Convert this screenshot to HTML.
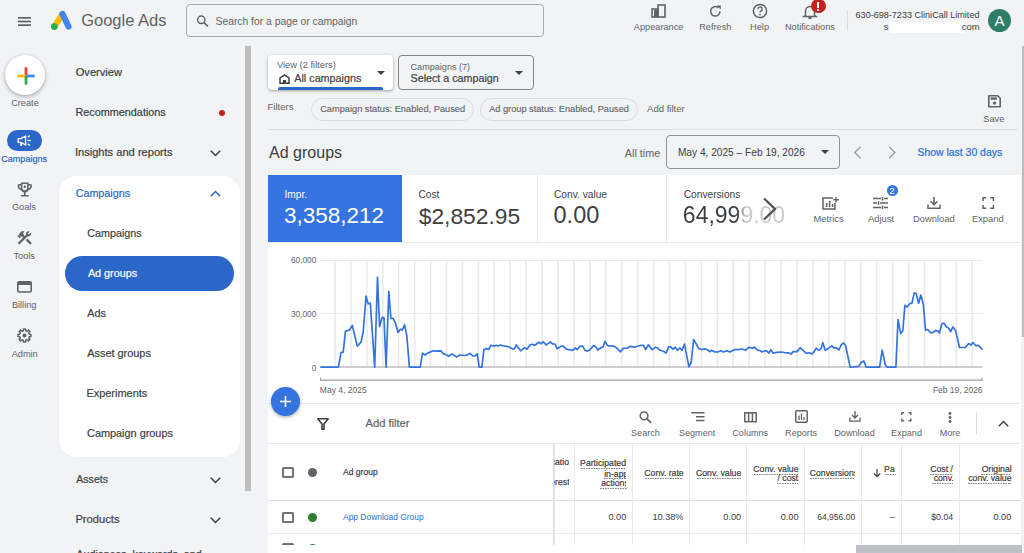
<!DOCTYPE html>
<html><head><meta charset="utf-8">
<style>
*{box-sizing:border-box;margin:0;padding:0}
html,body{width:1024px;height:553px;overflow:hidden;background:#f1f3f4;font-family:"Liberation Sans",sans-serif;color:#3c4043}
.a{position:absolute}
.t{position:absolute;white-space:nowrap;line-height:1}
.m{-webkit-text-stroke:0.2px currentColor}
.ic{position:absolute;overflow:visible}
</style></head><body>
<svg class="ic" style="left:18px;top:17px" width="13" height="9" viewBox="0 0 13 9"><rect y="0" width="13" height="1.7" fill="#5f6368"/><rect y="3.65" width="13" height="1.7" fill="#5f6368"/><rect y="7.3" width="13" height="1.7" fill="#5f6368"/></svg>
<svg class="ic" style="left:49.2px;top:10px" width="24" height="21" viewBox="0 0 24 21"><line x1="13.5" y1="4" x2="5.5" y2="16.5" stroke="#fbbc04" stroke-width="6.2" stroke-linecap="round"/><line x1="13.5" y1="4" x2="19.5" y2="16.5" stroke="#4285f4" stroke-width="6.2" stroke-linecap="round"/><circle cx="5.3" cy="16.6" r="3.4" fill="#34a853"/></svg>
<div class="t" style="left:81.17px;top:13.26px;font-size:16.52px;color:#5f6368;">Google Ads</div>
<div class="a" style="left:185.5px;top:3.5px;width:358px;height:33.5px;border:1px solid #a8abb0;border-radius:4px"></div>
<svg class="ic" style="left:196px;top:15px" width="13" height="12" viewBox="0 0 13 13"><circle cx="5.2" cy="5.2" r="4" fill="none" stroke="#5f6368" stroke-width="1.6"/><line x1="8.2" y1="8.2" x2="12.3" y2="12.3" stroke="#5f6368" stroke-width="1.8"/></svg>
<div class="t" style="left:215.53px;top:17.01px;font-size:10.34px;color:#5f6368;">Search for a page or campaign</div>
<svg class="ic" style="left:651px;top:4px" width="15" height="14" viewBox="0 0 15 14"><rect x="1" y="5" width="6" height="8" fill="none" stroke="#5f6368" stroke-width="1.6"/><rect x="7" y="1" width="7" height="12" fill="none" stroke="#5f6368" stroke-width="1.6"/><rect x="3" y="6" width="4" height="7" fill="#5f6368"/></svg>
<div class="t" style="left:633.86px;top:22.88px;font-size:9.20px;color:#5f6368;">Appearance</div>
<svg class="ic" style="left:709px;top:5px" width="13" height="12" viewBox="0 0 13 12"><path d="M11 6.3 A4.7 4.7 0 1 1 9.3 2.7" fill="none" stroke="#5f6368" stroke-width="1.5"/><path d="M7.6 0.4 L11.8 0.4 L11.8 4.6 Z" fill="#5f6368"/></svg>
<div class="t" style="left:699.18px;top:22.88px;font-size:9.20px;color:#5f6368;">Refresh</div>
<svg class="ic" style="left:752px;top:3px" width="16" height="16" viewBox="0 0 16 16"><circle cx="8" cy="8" r="6.6" fill="none" stroke="#5f6368" stroke-width="1.5"/><path d="M5.9 6.2 A2.1 2.1 0 1 1 8.8 8.1 C8.2 8.4 8 8.8 8 9.6" fill="none" stroke="#5f6368" stroke-width="1.4"/><circle cx="8" cy="11.6" r="0.9" fill="#5f6368"/></svg>
<div class="t" style="left:750.11px;top:22.88px;font-size:9.20px;color:#5f6368;">Help</div>
<svg class="ic" style="left:803px;top:4px" width="14" height="15" viewBox="0 0 14 15"><path d="M2.5 11.5 L2.5 7 A4.5 4.5 0 0 1 11.5 7 L11.5 11.5 L13 12.5 L1 12.5 Z" fill="none" stroke="#5f6368" stroke-width="1.5"/><rect x="5.5" y="13" width="3" height="2" fill="#5f6368"/></svg>
<div class="a" style="left:811px;top:-1.5px;width:14.5px;height:14.5px;border-radius:50%;background:#c5221f"></div>
<div class="a" style="left:817px;top:2px;width:2.2px;height:5.5px;background:#fff"></div><div class="a" style="left:817px;top:8.5px;width:2.2px;height:2px;background:#fff"></div>
<div class="t" style="left:784.90px;top:22.88px;font-size:9.20px;color:#5f6368;">Notifications</div>
<div class="a" style="left:846.5px;top:9.5px;width:1px;height:21.5px;background:#dadce0"></div>
<div class="t" style="left:855.55px;top:11.29px;font-size:9.07px;color:#3c4043;">630-698-7233 CliniCall Limited</div>
<div class="t" style="left:883.72px;top:22.23px;font-size:9.50px;color:#3c4043;">s</div>
<div class="a" style="left:890px;top:21.8px;width:73.5px;height:11.2px;background:#fff"></div>
<div class="t" style="left:961.66px;top:22.23px;font-size:9.50px;color:#3c4043;">com</div>
<div class="a" style="left:988px;top:9.3px;width:23px;height:23px;border-radius:50%;background:#2e7d67"></div>
<div class="t" style="left:994.50px;top:12.72px;font-size:15.04px;color:#fff;">A</div>
<div class="a" style="left:5px;top:55px;width:40px;height:40px;border-radius:50%;background:#fff;box-shadow:0 1px 3px rgba(60,64,67,.3),0 2px 4px 1px rgba(60,64,67,.15)"></div>
<svg class="ic" style="left:16.5px;top:66.5px" width="18" height="18" viewBox="0 0 18 18"><rect x="7.6" y="0.3" width="2.8" height="8.7" fill="#ea4335"/><rect x="0.3" y="7.6" width="8.7" height="2.8" fill="#fbbc04"/><rect x="9" y="7.6" width="8.7" height="2.8" fill="#4285f4"/><rect x="7.6" y="9" width="2.8" height="8.7" fill="#34a853"/></svg>
<div class="t" style="left:11.18px;top:99.18px;font-size:9.20px;color:#5f6368;">Create</div>
<div class="a" style="left:7px;top:130.4px;width:35px;height:20.3px;border-radius:11px;background:#2b67c8"></div>
<svg class="ic" style="left:17px;top:134.5px" width="15" height="12" viewBox="0 0 15 12"><path d="M1.2 3.6 L3.8 3.6 L8.6 1 L8.6 10 L3.8 7.4 L1.2 7.4 Z" fill="none" stroke="#fff" stroke-width="1.4" stroke-linejoin="round"/><path d="M3.2 7.5 L3.2 11 L5 11 L5 7.8" fill="#fff"/><line x1="10.6" y1="5.5" x2="13.8" y2="5.5" stroke="#fff" stroke-width="1.3"/><line x1="10.8" y1="2.2" x2="12.8" y2="0.6" stroke="#fff" stroke-width="1.3"/><line x1="10.8" y1="8.8" x2="12.8" y2="10.4" stroke="#fff" stroke-width="1.3"/></svg>
<div class="t m" style="left:1.25px;top:155.31px;font-size:9.05px;color:#2b67c8;">Campaigns</div>
<svg class="ic" style="left:16.5px;top:182px" width="15.5" height="15" viewBox="2.5 2.5 19 19"><path fill="#5f6368" d="M19 5h-2V3H7v2H5c-1.1 0-2 .9-2 2v1c0 2.55 1.92 4.63 4.39 4.94.63 1.5 1.98 2.63 3.61 2.96V19H7v2h10v-2h-4v-3.1c1.63-.33 2.98-1.46 3.61-2.96C19.08 12.63 21 10.55 21 8V7c0-1.1-.9-2-2-2zM5 8V7h2v3.82C5.84 10.4 5 9.3 5 8zm14 0c0 1.3-.84 2.4-2 2.82V7h2v1zM9 5h6v5a3 3 0 0 1-6 0z"/><circle cx="12" cy="8.5" r="1.5" fill="#5f6368"/></svg>
<div class="t" style="left:11.93px;top:202.98px;font-size:9.20px;color:#5f6368;">Goals</div>
<svg class="ic" style="left:17px;top:230.5px" width="15" height="14" viewBox="2 2.8 20 19"><path fill="#5f6368" d="M13.78 15.3L19.78 21.3L21.89 19.14L15.89 13.14L13.78 15.3M17.5 10.1C17.11 10.1 16.69 10.05 16.36 9.91L4.97 21.25L2.86 19.14L10.27 11.74L8.5 9.96L7.78 10.66L6.33 9.25V12.11L5.63 12.81L2.11 9.25L2.81 8.55H5.62L4.22 7.14L7.78 3.58C8.95 2.41 10.83 2.41 12 3.58L9.89 5.74L11.3 7.14L10.590 7.85L12.38 9.63L14.2 7.75C14.06 7.42 14 7 14 6.63C14 4.66 15.56 3.11 17.5 3.11C18.09 3.11 18.61 3.250 19.08 3.53L16.41 6.2L17.91 7.7L20.58 5.03C20.86 5.5 21 6 21 6.63C21 8.55 19.45 10.1 17.5 10.1Z"/></svg>
<div class="t" style="left:13.53px;top:251.98px;font-size:9.20px;color:#5f6368;">Tools</div>
<svg class="ic" style="left:16.7px;top:281.2px" width="15" height="12" viewBox="0 0 15 12"><rect x="0.8" y="0.8" width="13.4" height="10.2" rx="1.3" fill="none" stroke="#5f6368" stroke-width="1.6"/><rect x="1" y="1" width="13" height="3" fill="#5f6368"/></svg>
<div class="t" style="left:11.92px;top:301.18px;font-size:9.20px;color:#5f6368;">Billing</div>
<svg class="ic" style="left:17.2px;top:327.8px" width="15" height="15" viewBox="0 0 15 15"><path d="M12.25,6.28 L14.01,6.43 L14.01,8.57 L12.25,8.72 L11.72,9.99 L12.86,11.35 L11.35,12.86 L9.99,11.72 L8.72,12.25 L8.57,14.01 L6.43,14.01 L6.28,12.25 L5.01,11.72 L3.65,12.86 L2.14,11.35 L3.28,9.99 L2.75,8.72 L0.99,8.57 L0.99,6.43 L2.75,6.28 L3.28,5.01 L2.14,3.65 L3.65,2.14 L5.01,3.28 L6.28,2.75 L6.43,0.99 L8.57,0.99 L8.72,2.75 L9.99,3.28 L11.35,2.14 L12.86,3.65 L11.72,5.01Z" fill="none" stroke="#5f6368" stroke-width="1.5" stroke-linejoin="round"/><circle cx="7.5" cy="7.5" r="2" fill="#5f6368"/></svg>
<div class="t" style="left:11.66px;top:350.18px;font-size:9.20px;color:#5f6368;">Admin</div>
<div class="t m" style="left:75.75px;top:67.32px;font-size:11.09px;color:#3c4043;">Overview</div>
<div class="t m" style="left:75.38px;top:106.83px;font-size:10.85px;color:#3c4043;">Recommendations</div>
<div class="a" style="left:219px;top:109.5px;width:6px;height:6px;border-radius:50%;background:#c5221f"></div>
<div class="t m" style="left:74.90px;top:146.65px;font-size:11.12px;color:#3c4043;">Insights and reports</div>
<svg class="ic" style="left:209.5px;top:149.5px" width="11" height="7" viewBox="0 0 11 7"><path d="M0.8 0.8 L5.5 5.5 L10.2 0.8" fill="none" stroke="#3c4043" stroke-width="1.5"/></svg>
<div class="a" style="left:59px;top:176px;width:181px;height:281px;border-radius:18px;background:#fff"></div>
<div class="t m" style="left:75.66px;top:187.66px;font-size:10.75px;color:#2b67c8;">Campaigns</div>
<svg class="ic" style="left:209.5px;top:189.5px" width="11" height="7" viewBox="0 0 11 7"><path d="M0.8 6.2 L5.5 1.5 L10.2 6.2" fill="none" stroke="#2b67c8" stroke-width="1.5"/></svg>
<div class="t m" style="left:87.36px;top:227.68px;font-size:10.73px;color:#3c4043;">Campaigns</div>
<div class="a" style="left:64.5px;top:256px;width:169.5px;height:34.5px;border-radius:17.25px;background:#2b67c8"></div>
<div class="t m" style="left:87.90px;top:267.51px;font-size:10.81px;color:#fff;">Ad groups</div>
<div class="t m" style="left:87.30px;top:307.60px;font-size:10.83px;color:#3c4043;">Ads</div>
<div class="t m" style="left:87.30px;top:348.04px;font-size:10.90px;color:#3c4043;">Asset groups</div>
<div class="t m" style="left:86.42px;top:387.98px;font-size:10.96px;color:#3c4043;">Experiments</div>
<div class="t m" style="left:87.06px;top:428.45px;font-size:10.88px;color:#3c4043;">Campaign groups</div>
<div class="t m" style="left:76.30px;top:474.33px;font-size:10.56px;color:#3c4043;">Assets</div>
<svg class="ic" style="left:209.5px;top:477px" width="11" height="7" viewBox="0 0 11 7"><path d="M0.8 0.8 L5.5 5.5 L10.2 0.8" fill="none" stroke="#3c4043" stroke-width="1.5"/></svg>
<div class="t m" style="left:75.40px;top:513.88px;font-size:11.20px;color:#3c4043;">Products</div>
<svg class="ic" style="left:209.5px;top:517px" width="11" height="7" viewBox="0 0 11 7"><path d="M0.8 0.8 L5.5 5.5 L10.2 0.8" fill="none" stroke="#3c4043" stroke-width="1.5"/></svg>
<div class="t m" style="left:76.30px;top:549.37px;font-size:10.75px;color:#3c4043;">Audiences, keywords, and</div>
<div class="a" style="left:245.4px;top:46px;width:6px;height:445px;background:#bdbdbd"></div>
<div class="a" style="left:268px;top:55px;width:125px;height:35px;background:#fff;border-radius:4px;box-shadow:0 1px 2px rgba(60,64,67,.3),0 1px 3px 1px rgba(60,64,67,.12)"></div>
<div class="t" style="left:276.95px;top:61.47px;font-size:9.33px;color:#5f6368;">View (2 filters)</div>
<svg class="ic" style="left:279px;top:73.5px" width="11" height="10" viewBox="0 0 11 10"><path d="M1 9.2 L1 4 L5.5 0.8 L10 4 L10 9.2 Z" fill="none" stroke="#3c4043" stroke-width="1.5"/><rect x="4" y="6" width="3" height="3.5" fill="#3c4043"/></svg>
<div class="t m" style="left:294.30px;top:73.34px;font-size:10.78px;color:#3c4043;">All campaigns</div>
<svg class="ic" style="left:377px;top:70.8px" width="8" height="4" viewBox="0 0 8 4"><path d="M0 0 L8 0 L4 4 Z" fill="#3c4043"/></svg>
<div class="a" style="left:278px;top:87px;width:104.5px;height:3px;background:#2b67c8;border-radius:2px 2px 0 0"></div>
<div class="a" style="left:398.3px;top:55.3px;width:135.7px;height:34.5px;border:1px solid #80868b;border-radius:4px"></div>
<div class="t" style="left:410.55px;top:63.28px;font-size:9.08px;color:#5f6368;">Campaigns (7)</div>
<div class="t m" style="left:410.52px;top:73.39px;font-size:10.72px;color:#3c4043;">Select a campaign</div>
<svg class="ic" style="left:515px;top:70.8px" width="8" height="4" viewBox="0 0 8 4"><path d="M0 0 L8 0 L4 4 Z" fill="#3c4043"/></svg>
<div class="t" style="left:267.44px;top:102.18px;font-size:9.56px;color:#5f6368;">Filters</div>
<div class="a" style="left:311.3px;top:97.7px;width:162.6px;height:23px;border:1px solid #dadce0;border-radius:12px"></div>
<div class="t" style="left:320.14px;top:104.74px;font-size:9.25px;color:#5f6368;-webkit-text-stroke:0.12px #5f6368;">Campaign status: Enabled, Paused</div>
<div class="a" style="left:480px;top:97.7px;width:158px;height:23px;border:1px solid #dadce0;border-radius:12px"></div>
<div class="t" style="left:489.20px;top:104.78px;font-size:9.21px;color:#5f6368;-webkit-text-stroke:0.12px #5f6368;">Ad group status: Enabled, Paused</div>
<div class="t" style="left:647.00px;top:104.37px;font-size:9.57px;color:#5f6368;">Add filter</div>
<svg class="ic" style="left:987.5px;top:95.4px" width="13" height="12.5" viewBox="0 0 13 12.5"><path d="M0.8 0.8 L9.7 0.8 L12.2 3.3 L12.2 11.7 L0.8 11.7 Z" fill="none" stroke="#5f6368" stroke-width="1.6" stroke-linejoin="round"/><rect x="2.6" y="2.4" width="6.3" height="2.3" fill="#5f6368"/><circle cx="6.5" cy="8.1" r="1.7" fill="#5f6368"/></svg>
<div class="t" style="left:983.31px;top:115.18px;font-size:9.20px;color:#5f6368;">Save</div>
<div class="a" style="left:268px;top:128.5px;width:750px;height:1px;background:#dadce0"></div>
<div class="t" style="left:269.10px;top:145.30px;font-size:16.00px;color:#3c4043;">Ad groups</div>
<div class="t" style="left:624.80px;top:147.62px;font-size:10.80px;color:#5f6368;">All time</div>
<div class="a" style="left:666px;top:135px;width:173.6px;height:33.8px;border:1px solid #8f9499;border-radius:4px"></div>
<div class="t" style="left:677.89px;top:148.06px;font-size:10.17px;color:#3c4043;">May 4, 2025 – Feb 19, 2026</div>
<svg class="ic" style="left:821px;top:150px" width="8" height="4" viewBox="0 0 8 4"><path d="M0 0 L8 0 L4 4 Z" fill="#3c4043"/></svg>
<svg class="ic" style="left:853px;top:146px" width="9" height="13" viewBox="0 0 9 13"><path d="M7.5 0.8 L1.8 6.5 L7.5 12.2" fill="none" stroke="#9aa0a6" stroke-width="1.4"/></svg>
<svg class="ic" style="left:888px;top:146px" width="9" height="13" viewBox="0 0 9 13"><path d="M1.2 0.8 L6.9 6.5 L1.2 12.2" fill="none" stroke="#9aa0a6" stroke-width="1.4"/></svg>
<div class="t m" style="left:917.53px;top:147.94px;font-size:10.43px;color:#2c6ed5;">Show last 30 days</div>
<div class="a" style="left:268px;top:175.3px;width:753px;height:370px;background:#fff"></div>
<div class="a" style="left:268px;top:175.3px;width:133.5px;height:66.5px;background:#3574e0"></div>
<div class="a" style="left:536.5px;top:175.3px;width:1px;height:66.5px;background:#e8eaed"></div>
<div class="a" style="left:666px;top:175.3px;width:1px;height:66.5px;background:#e8eaed"></div>
<div class="a" style="left:268px;top:241.8px;width:753px;height:1px;background:#e8eaed"></div>
<div class="t" style="left:284.48px;top:190.23px;font-size:10.20px;color:#fff;">Impr.</div>
<div class="t" style="left:284.10px;top:204.89px;font-size:22.48px;color:#fff;">3,358,212</div>
<div class="t" style="left:418.49px;top:190.23px;font-size:10.20px;color:#3c4043;">Cost</div>
<div class="t" style="left:418.77px;top:204.64px;font-size:22.77px;color:#3c4043;">$2,852.95</div>
<div class="t" style="left:553.99px;top:190.23px;font-size:10.20px;color:#3c4043;">Conv. value</div>
<div class="t" style="left:553.56px;top:204.03px;font-size:23.50px;color:#3c4043;">0.00</div>
<div class="t" style="left:683.69px;top:190.23px;font-size:10.20px;color:#3c4043;">Conversions</div>
<div class="t" style="left:682.85px;top:204.45px;font-size:23.00px;color:#3c4043;background:linear-gradient(90deg,#3c4043 0,#3c4043 54px,#c8cacd 62px,#c8cacd 100%);-webkit-background-clip:text;background-clip:text;-webkit-text-fill-color:transparent;">64,999.00</div>
<svg class="ic" style="left:761px;top:197px" width="16" height="24" viewBox="0 0 16 24"><path d="M3 1.5 L14 12 L3 22.5" fill="none" stroke="#505458" stroke-width="2.4"/></svg>
<svg class="ic" style="left:821.5px;top:196.5px" width="17" height="13" viewBox="0 0 17 13"><path d="M11 1 L1 1 L1 12 L13 12 L13 6" fill="none" stroke="#5f6368" stroke-width="1.5"/><rect x="3.8" y="6" width="1.6" height="4" fill="#5f6368"/><rect x="6.8" y="4" width="1.6" height="6" fill="#5f6368"/><rect x="9.8" y="7" width="1.6" height="3" fill="#5f6368"/><path d="M14 0 L14 5.5 M11.3 2.7 L16.7 2.7" stroke="#5f6368" stroke-width="1.4"/></svg>
<div class="t" style="left:813.45px;top:214.21px;font-size:9.40px;color:#5f6368;">Metrics</div>
<svg class="ic" style="left:873.3px;top:196.5px" width="15" height="12" viewBox="0 0 15 12"><path d="M0 1.5 L8 1.5 M11 1.5 L15 1.5 M0 6 L4 6 M7 6 L15 6 M0 10.5 L8 10.5 M11 10.5 L15 10.5" stroke="#5f6368" stroke-width="1.5"/><path d="M9.5 0 L9.5 3.5 M5.5 4.2 L5.5 7.8 M9.5 8.7 L9.5 12" stroke="#5f6368" stroke-width="1.5"/></svg>
<div class="a" style="left:886.5px;top:184.8px;width:11px;height:11px;border-radius:50%;background:#3574e0"></div>
<div class="t" style="left:889.32px;top:186.28px;font-size:9.67px;color:#fff;">2</div>
<div class="t" style="left:867.98px;top:214.21px;font-size:9.40px;color:#5f6368;">Adjust</div>
<svg class="ic" style="left:927.3px;top:196.5px" width="14" height="12" viewBox="0 0 14 12"><path d="M7 0 L7 7.5 M3.6 4.3 L7 7.7 L10.4 4.3" fill="none" stroke="#5f6368" stroke-width="1.5"/><path d="M1 7.5 L1 11.2 L13 11.2 L13 7.5" fill="none" stroke="#5f6368" stroke-width="1.5"/></svg>
<div class="t" style="left:913.04px;top:214.21px;font-size:9.40px;color:#5f6368;">Download</div>
<svg class="ic" style="left:981.7px;top:197px" width="12.5" height="12" viewBox="0 0 12 12"><path d="M0.8 4 L0.8 0.8 L4 0.8 M8 0.8 L11.2 0.8 L11.2 4 M11.2 8 L11.2 11.2 L8 11.2 M4 11.2 L0.8 11.2 L0.8 8" fill="none" stroke="#5f6368" stroke-width="1.5"/></svg>
<div class="t" style="left:971.90px;top:214.21px;font-size:9.40px;color:#5f6368;">Expand</div>
<svg class="ic" style="left:0;top:0" width="1024" height="553" viewBox="0 0 1024 553"><g stroke="#e8eaed" stroke-width="1.6"><line x1="335.0" y1="260" x2="335.0" y2="367" /><line x1="350.9" y1="260" x2="350.9" y2="367" /><line x1="366.9" y1="260" x2="366.9" y2="367" /><line x1="382.8" y1="260" x2="382.8" y2="367" /><line x1="398.7" y1="260" x2="398.7" y2="367" /><line x1="414.7" y1="260" x2="414.7" y2="367" /><line x1="430.6" y1="260" x2="430.6" y2="367" /><line x1="446.5" y1="260" x2="446.5" y2="367" /><line x1="462.4" y1="260" x2="462.4" y2="367" /><line x1="478.4" y1="260" x2="478.4" y2="367" /><line x1="494.3" y1="260" x2="494.3" y2="367" /><line x1="510.2" y1="260" x2="510.2" y2="367" /><line x1="526.2" y1="260" x2="526.2" y2="367" /><line x1="542.1" y1="260" x2="542.1" y2="367" /><line x1="558.0" y1="260" x2="558.0" y2="367" /><line x1="573.9" y1="260" x2="573.9" y2="367" /><line x1="589.9" y1="260" x2="589.9" y2="367" /><line x1="605.8" y1="260" x2="605.8" y2="367" /><line x1="621.7" y1="260" x2="621.7" y2="367" /><line x1="637.7" y1="260" x2="637.7" y2="367" /><line x1="653.6" y1="260" x2="653.6" y2="367" /><line x1="669.5" y1="260" x2="669.5" y2="367" /><line x1="685.5" y1="260" x2="685.5" y2="367" /><line x1="701.4" y1="260" x2="701.4" y2="367" /><line x1="717.3" y1="260" x2="717.3" y2="367" /><line x1="733.2" y1="260" x2="733.2" y2="367" /><line x1="749.2" y1="260" x2="749.2" y2="367" /><line x1="765.1" y1="260" x2="765.1" y2="367" /><line x1="781.0" y1="260" x2="781.0" y2="367" /><line x1="797.0" y1="260" x2="797.0" y2="367" /><line x1="812.9" y1="260" x2="812.9" y2="367" /><line x1="828.8" y1="260" x2="828.8" y2="367" /><line x1="844.8" y1="260" x2="844.8" y2="367" /><line x1="860.7" y1="260" x2="860.7" y2="367" /><line x1="876.6" y1="260" x2="876.6" y2="367" /><line x1="892.5" y1="260" x2="892.5" y2="367" /><line x1="908.5" y1="260" x2="908.5" y2="367" /><line x1="924.4" y1="260" x2="924.4" y2="367" /><line x1="940.3" y1="260" x2="940.3" y2="367" /><line x1="956.3" y1="260" x2="956.3" y2="367" /><line x1="972.2" y1="260" x2="972.2" y2="367" /></g><line x1="320" y1="260.5" x2="982.5" y2="260.5" stroke="#e8eaed" stroke-width="1"/><line x1="320" y1="313.5" x2="982.5" y2="313.5" stroke="#e8eaed" stroke-width="1"/><line x1="320" y1="367" x2="982.5" y2="367" stroke="#9e9e9e" stroke-width="1.2"/><line x1="320" y1="380.2" x2="982.5" y2="380.2" stroke="#9e9e9e" stroke-width="1.2"/><line x1="320.5" y1="377.5" x2="320.5" y2="380.5" stroke="#9e9e9e" stroke-width="1"/><line x1="982" y1="377.5" x2="982" y2="380.5" stroke="#9e9e9e" stroke-width="1"/><path d="M320.4,367.1 L338.4,367.1 L341.0,352.6 L343.2,352.2 L345.4,331.4 L349.7,329.8 L352.3,325.5 L357.3,346.1 L361.0,342.2 L363.2,332.0 L366.0,296.2 L368.1,303.8 L370.3,303.2 L374.7,367.1 L377.5,277.3 L379.6,326.6 L382.2,317.3 L384.0,317.9 L386.1,367.1 L388.8,291.4 L390.9,318.3 L393.1,318.3 L395.3,322.7 L398.1,332.4 L400.2,329.4 L402.4,329.8 L404.6,324.8 L406.8,335.7 L409.4,367.1 L420.2,367.2 L422.5,353.1 L425.0,355.0 L427.7,353.1 L433.1,350.8 L436.2,351.1 L440.9,350.8 L443.3,353.9 L445.6,354.4 L448.8,356.2 L451.9,353.9 L456.6,357.0 L459.7,355.0 L466.0,355.5 L469.8,353.4 L473.0,356.0 L475.0,356.0 L477.2,353.9 L479.2,367.2 L481.9,367.2 L483.9,349.7 L486.2,348.4 L488.6,349.5 L490.9,345.3 L494.0,346.1 L496.4,345.3 L498.0,346.1 L500.3,345.0 L505.0,346.2 L508.1,346.6 L512.8,348.9 L514.4,348.9 L516.2,345.0 L520.6,350.8 L524.5,347.7 L526.9,349.2 L530.0,345.0 L532.3,344.2 L534.7,345.3 L538.9,342.2 L540.9,343.8 L543.3,341.7 L546.1,345.0 L550.3,341.9 L552.7,344.0 L555.0,344.0 L557.3,348.8 L561.2,346.1 L563.1,346.1 L566.2,349.2 L572.5,350.5 L575.3,348.0 L577.2,349.5 L580.3,346.1 L582.7,346.1 L585.0,350.3 L587.3,351.1 L589.7,350.0 L593.6,345.6 L595.6,346.6 L597.8,350.0 L600.9,347.7 L603.0,347.2 L605.0,341.4 L607.7,345.6 L614.7,346.4 L617.0,348.4 L620.5,351.9 L623.3,348.4 L627.2,348.1 L630.3,346.4 L634.2,347.2 L641.2,345.3 L643.6,345.6 L645.6,349.5 L648.3,344.8 L652.2,349.7 L655.3,347.3 L657.7,348.0 L660.0,350.3 L663.4,351.2 L666.2,353.1 L668.6,346.9 L670.9,346.9 L672.8,349.2 L675.3,347.3 L677.5,350.3 L679.8,348.0 L681.9,350.3 L684.5,344.1 L688.9,366.9 L691.2,362.5 L693.6,339.5 L695.9,343.4 L698.6,348.4 L701.4,349.5 L705.3,348.9 L707.7,350.0 L709.7,351.6 L711.6,350.3 L714.7,351.9 L717.8,352.0 L720.9,350.8 L723.6,352.0 L726.7,350.8 L729.8,351.9 L734.5,349.7 L738.4,349.7 L741.6,348.8 L745.5,350.3 L748.6,347.3 L752.5,348.1 L754.8,347.2 L757.2,350.0 L760.3,350.8 L761.9,352.0 L765.0,350.8 L766.6,350.8 L768.9,353.1 L770.8,349.7 L773.1,353.1 L776.7,352.3 L781.4,352.0 L784.5,352.7 L788.4,352.8 L791.1,354.1 L793.1,351.6 L797.0,351.6 L800.2,347.7 L803.0,350.3 L806.4,353.4 L808.8,352.8 L811.9,353.9 L813.4,352.7 L816.2,348.1 L818.9,350.3 L821.2,348.4 L822.8,342.5 L825.2,350.3 L828.3,348.4 L831.9,345.8 L834.1,348.1 L836.1,347.7 L838.9,350.0 L841.2,344.8 L843.4,343.0 L845.5,345.3 L850.2,367.2 L854.1,366.9 L858.8,366.4 L861.1,362.5 L863.8,360.9 L866.2,367.2 L879.6,367.1 L882.2,350.1 L885.3,365.0 L887.3,367.1 L895.9,367.1 L898.0,319.5 L900.7,333.6 L902.8,330.7 L904.9,305.4 L907.1,307.1 L909.7,303.7 L911.9,303.2 L914.3,292.9 L916.2,293.7 L918.6,303.2 L920.8,295.0 L923.4,304.9 L925.5,330.2 L927.7,329.5 L930.3,332.4 L932.4,332.9 L935.4,330.7 L938.0,331.0 L939.4,332.9 L942.0,323.5 L944.0,323.3 L946.6,327.2 L948.3,327.8 L950.6,331.5 L953.0,326.9 L955.7,331.0 L959.5,347.5 L965.2,347.5 L968.6,343.6 L971.0,344.9 L973.2,342.7 L975.8,345.6 L978.4,345.3 L982.4,349.6" fill="none" stroke="#3574e0" stroke-width="1.7" stroke-linejoin="round"/></svg>
<div class="t" style="left:290.99px;top:257.17px;font-size:8.27px;color:#5f6368;">60,000</div>
<div class="t" style="left:290.89px;top:310.34px;font-size:8.30px;color:#5f6368;">30,000</div>
<div class="t" style="left:311.68px;top:363.55px;font-size:8.30px;color:#5f6368;">0</div>
<div class="t" style="left:319.82px;top:386.35px;font-size:8.53px;color:#5f6368;">May 4, 2025</div>
<div class="t" style="left:932.93px;top:386.43px;font-size:8.43px;color:#5f6368;">Feb 19, 2026</div>
<div class="a" style="left:268px;top:402.5px;width:753px;height:1px;background:#e8eaed"></div>
<div class="a" style="left:271px;top:387.2px;width:29px;height:29px;border-radius:50%;background:#3574e0;box-shadow:0 1px 3px rgba(60,64,67,.3),0 2px 4px rgba(60,64,67,.15)"></div>
<svg class="ic" style="left:280px;top:396.2px" width="11" height="11" viewBox="0 0 11 11"><path d="M5.5 0 L5.5 11 M0 5.5 L11 5.5" stroke="#fff" stroke-width="1.6"/></svg>
<svg class="ic" style="left:317.3px;top:417.6px" width="12" height="12" viewBox="0 0 12 12"><path d="M0.8 0.8 L11.2 0.8 L7 6 L7 11.2 L5 11.2 L5 6 Z" fill="none" stroke="#3c4043" stroke-width="1.6" stroke-linejoin="round"/></svg>
<div class="t m" style="left:365.50px;top:417.83px;font-size:11.15px;color:#5f6368;">Add filter</div>
<svg class="ic" style="left:639px;top:410.7px" width="13" height="12.5" viewBox="0 0 13 13"><circle cx="5" cy="5" r="4" fill="none" stroke="#5f6368" stroke-width="1.6"/><line x1="8" y1="8" x2="12.3" y2="12.3" stroke="#5f6368" stroke-width="1.8"/></svg>
<div class="t" style="left:631.04px;top:429.26px;font-size:9.10px;color:#5f6368;">Search</div>
<svg class="ic" style="left:690.7px;top:412px" width="14" height="9.5" viewBox="0 0 14 9.5"><path d="M0.3 0.8 L13.5 0.8 M5 4.7 L13.5 4.7 M5 8.5 L13.5 8.5" stroke="#5f6368" stroke-width="1.5"/></svg>
<div class="t" style="left:678.92px;top:429.26px;font-size:9.10px;color:#5f6368;">Segment</div>
<svg class="ic" style="left:744px;top:411.7px" width="13" height="10.5" viewBox="0 0 13 10.5"><rect x="0.8" y="0.8" width="11.4" height="8.9" fill="none" stroke="#5f6368" stroke-width="1.5"/><path d="M4.6 1 L4.6 10 M8.4 1 L8.4 10" stroke="#5f6368" stroke-width="1.5"/></svg>
<div class="t" style="left:732.28px;top:429.26px;font-size:9.10px;color:#5f6368;">Columns</div>
<svg class="ic" style="left:795.2px;top:410px" width="13" height="13" viewBox="0 0 13 13"><rect x="0.8" y="0.8" width="11.4" height="11.4" rx="1" fill="none" stroke="#5f6368" stroke-width="1.5"/><path d="M4 5.5 L4 10 M6.5 3.5 L6.5 10 M9 7 L9 10" stroke="#5f6368" stroke-width="1.3"/></svg>
<div class="t" style="left:785.12px;top:429.26px;font-size:9.10px;color:#5f6368;">Reports</div>
<svg class="ic" style="left:849px;top:411px" width="12" height="11" viewBox="0 0 14 13"><path d="M7 0 L7 8 M3.5 4.8 L7 8.3 L10.5 4.8" fill="none" stroke="#5f6368" stroke-width="1.6"/><path d="M1 8 L1 12 L13 12 L13 8" fill="none" stroke="#5f6368" stroke-width="1.6"/></svg>
<div class="t" style="left:834.31px;top:429.26px;font-size:9.10px;color:#5f6368;">Download</div>
<svg class="ic" style="left:901.3px;top:412px" width="10.7" height="9.5" viewBox="0 0 12 11"><path d="M0.8 3.5 L0.8 0.8 L3.5 0.8 M8.5 0.8 L11.2 0.8 L11.2 3.5 M11.2 7.5 L11.2 10.2 L8.5 10.2 M3.5 10.2 L0.8 10.2 L0.8 7.5" fill="none" stroke="#5f6368" stroke-width="1.6"/></svg>
<div class="t" style="left:891.11px;top:429.26px;font-size:9.10px;color:#5f6368;">Expand</div>
<svg class="ic" style="left:948px;top:411.5px" width="4" height="11" viewBox="0 0 4 11"><circle cx="2" cy="1.5" r="1.4" fill="#5f6368"/><circle cx="2" cy="5.5" r="1.4" fill="#5f6368"/><circle cx="2" cy="9.5" r="1.4" fill="#5f6368"/></svg>
<div class="t" style="left:939.69px;top:429.26px;font-size:9.10px;color:#5f6368;">More</div>
<div class="a" style="left:976px;top:412px;width:1px;height:22px;background:#dadce0"></div>
<svg class="ic" style="left:997.5px;top:420px" width="11" height="7" viewBox="0 0 11 7"><path d="M0.8 6.2 L5.5 1.5 L10.2 6.2" fill="none" stroke="#3c4043" stroke-width="1.5"/></svg>
<div class="a" style="left:268px;top:443.2px;width:753px;height:1px;background:#e8eaed"></div>
<div class="a" style="left:268px;top:499.6px;width:753px;height:1.6px;background:#dadce0"></div>
<div class="a" style="left:268px;top:533px;width:753px;height:1px;background:#e8eaed"></div>
<div class="a" style="left:574px;top:443.2px;width:1px;height:102.2px;background:#e8eaed"></div>
<div class="a" style="left:632px;top:443.2px;width:1px;height:102.2px;background:#e8eaed"></div>
<div class="a" style="left:689px;top:443.2px;width:1px;height:102.2px;background:#e8eaed"></div>
<div class="a" style="left:746px;top:443.2px;width:1px;height:102.2px;background:#e8eaed"></div>
<div class="a" style="left:804px;top:443.2px;width:1px;height:102.2px;background:#e8eaed"></div>
<div class="a" style="left:861px;top:443.2px;width:1px;height:102.2px;background:#e8eaed"></div>
<div class="a" style="left:901px;top:443.2px;width:1px;height:102.2px;background:#e8eaed"></div>
<div class="a" style="left:959px;top:443.2px;width:1px;height:102.2px;background:#e8eaed"></div>
<div class="a" style="left:552.5px;top:443.2px;width:2px;height:102.2px;background:linear-gradient(90deg,#d4d6d9,#eceef0)"></div>
<div class="a" style="left:282.3px;top:466.5px;width:11.6px;height:11.6px;border:2px solid #6f7378;border-radius:1.5px"></div>
<div class="a" style="left:308px;top:467.5px;width:9px;height:9px;border-radius:50%;background:#5f6368"></div>
<div class="t m" style="left:343.00px;top:468.23px;font-size:8.56px;color:#3c4043;">Ad group</div>
<div class="a" style="left:282.3px;top:511.7px;width:11.6px;height:11.6px;border:2px solid #6f7378;border-radius:1.5px"></div>
<div class="a" style="left:308px;top:512.5px;width:9px;height:9px;border-radius:50%;background:#2e7d32"></div>
<div class="t" style="left:343.00px;top:513.42px;font-size:8.45px;color:#2c6ed5;">App Download Group</div>
<div class="a" style="left:282.3px;top:543.3px;width:11.6px;height:11.6px;border:2px solid #6f7378;border-radius:1.5px"></div>
<div class="a" style="left:308px;top:544px;width:9px;height:9px;border-radius:50%;background:#2e7d32"></div>
<div class="a" style="left:554px;top:444px;width:15px;height:56px;overflow:hidden">
<div class="t m" style="left:-3.35px;top:14.11px;font-size:8.70px;color:#3c4043;">cation</div>
<div class="t m" style="left:-6.13px;top:34.31px;font-size:8.70px;color:#3c4043;">terest</div>
</div>
<div class="a" style="left:575.5px;top:444px;width:50.299999999999955px;height:56px;overflow:hidden">
<div class="t m" style="left:4.60px;top:14.91px;font-size:8.70px;color:#3c4043;">Participated</div>
<div class="t m" style="left:28.66px;top:26.11px;font-size:8.70px;color:#3c4043;">in-app</div>
<div class="t m" style="left:25.73px;top:35.11px;font-size:8.70px;color:#3c4043;">actions</div>
</div>
<div class="a" style="left:580.8px;top:467.8px;width:45.700000000000045px;height:1px;background-image:linear-gradient(90deg,#80868b 60%,transparent 60%);background-size:2.5px 1px"></div>
<div class="a" style="left:603.8px;top:477.5px;width:22.700000000000045px;height:1px;background-image:linear-gradient(90deg,#80868b 60%,transparent 60%);background-size:2.5px 1px"></div>
<div class="a" style="left:599.5px;top:487.8px;width:27.0px;height:1px;background-image:linear-gradient(90deg,#80868b 60%,transparent 60%);background-size:2.5px 1px"></div>
<div class="t m" style="left:644.37px;top:469.04px;font-size:8.66px;color:#3c4043;">Conv. rate</div>
<div class="a" style="left:644.8px;top:478px;width:38.5px;height:1px;background-image:linear-gradient(90deg,#80868b 60%,transparent 60%);background-size:2.5px 1px"></div>
<div class="t m" style="left:696.01px;top:469.00px;font-size:8.70px;color:#3c4043;">Conv. value</div>
<div class="a" style="left:696.8px;top:478px;width:44.10000000000002px;height:1px;background-image:linear-gradient(90deg,#80868b 60%,transparent 60%);background-size:2.5px 1px"></div>
<div class="t m" style="left:753.31px;top:464.61px;font-size:8.70px;color:#3c4043;">Conv. value</div>
<div class="a" style="left:753.9px;top:473.5px;width:44.30000000000007px;height:1px;background-image:linear-gradient(90deg,#80868b 60%,transparent 60%);background-size:2.5px 1px"></div>
<div class="t m" style="left:777.49px;top:474.41px;font-size:8.70px;color:#3c4043;">/ cost</div>
<div class="a" style="left:777px;top:483.3px;width:21.200000000000045px;height:1px;background-image:linear-gradient(90deg,#80868b 60%,transparent 60%);background-size:2.5px 1px"></div>
<div class="a" style="left:805px;top:444px;width:50px;height:56px;overflow:hidden">
<div class="t m" style="left:4.77px;top:25.11px;font-size:8.70px;color:#3c4043;">Conversions</div>
</div>
<div class="a" style="left:810.2px;top:478px;width:44.799999999999955px;height:1px;background-image:linear-gradient(90deg,#80868b 60%,transparent 60%);background-size:2.5px 1px"></div>
<svg class="ic" style="left:872.5px;top:468.6px" width="8" height="8.5" viewBox="0 0 8 8.5"><path d="M4 0 L4 7.5 M0.8 4.5 L4 7.7 L7.2 4.5" fill="none" stroke="#3c4043" stroke-width="1.2"/></svg>
<div class="a" style="left:862.5px;top:444px;width:32.0px;height:56px;overflow:hidden">
<div class="t m" style="left:21.60px;top:20.61px;font-size:8.70px;color:#3c4043;">Paid</div>
</div>
<div class="a" style="left:884.8px;top:473.5px;width:11.200000000000045px;height:1px;background-image:linear-gradient(90deg,#80868b 60%,transparent 60%);background-size:2.5px 1px"></div>
<div class="t m" style="left:930.25px;top:464.61px;font-size:8.70px;color:#3c4043;">Cost /</div>
<div class="a" style="left:930px;top:473.5px;width:23px;height:1px;background-image:linear-gradient(90deg,#80868b 60%,transparent 60%);background-size:2.5px 1px"></div>
<div class="t m" style="left:933.64px;top:474.41px;font-size:8.70px;color:#3c4043;">conv.</div>
<div class="a" style="left:932px;top:483.3px;width:21px;height:1px;background-image:linear-gradient(90deg,#80868b 60%,transparent 60%);background-size:2.5px 1px"></div>
<div class="t m" style="left:981.79px;top:464.61px;font-size:8.70px;color:#3c4043;">Original</div>
<div class="a" style="left:981.3px;top:473.5px;width:29.90000000000009px;height:1px;background-image:linear-gradient(90deg,#80868b 60%,transparent 60%);background-size:2.5px 1px"></div>
<div class="t m" style="left:968.22px;top:474.41px;font-size:8.70px;color:#3c4043;">conv. value</div>
<div class="a" style="left:968.2px;top:483.3px;width:43.0px;height:1px;background-image:linear-gradient(90deg,#80868b 60%,transparent 60%);background-size:2.5px 1px"></div>
<div class="t" style="left:608.43px;top:512.68px;font-size:9.20px;color:#3c4043;">0.00</div>
<div class="t" style="left:652.39px;top:512.68px;font-size:9.20px;color:#3c4043;">10.38%</div>
<div class="t" style="left:723.33px;top:512.68px;font-size:9.20px;color:#3c4043;">0.00</div>
<div class="t" style="left:780.63px;top:512.68px;font-size:9.20px;color:#3c4043;">0.00</div>
<div class="t" style="left:817.17px;top:513.22px;font-size:8.57px;color:#3c4043;">64,956.00</div>
<div class="t" style="left:889.70px;top:512.68px;font-size:9.20px;color:#3c4043;">–</div>
<div class="t" style="left:931.21px;top:513.00px;font-size:8.82px;color:#3c4043;">$0.04</div>
<div class="t" style="left:993.43px;top:512.68px;font-size:9.20px;color:#3c4043;">0.00</div>
<div class="a" style="left:268px;top:545.4px;width:753px;height:8px;background:#fff"></div>
<div class="a" style="left:856px;top:545.4px;width:166px;height:7.6px;background:#bdc1c6"></div>
<div class="a" style="left:1021.5px;top:46px;width:2.5px;height:291px;background:#bdbdbd"></div>
</body></html>
